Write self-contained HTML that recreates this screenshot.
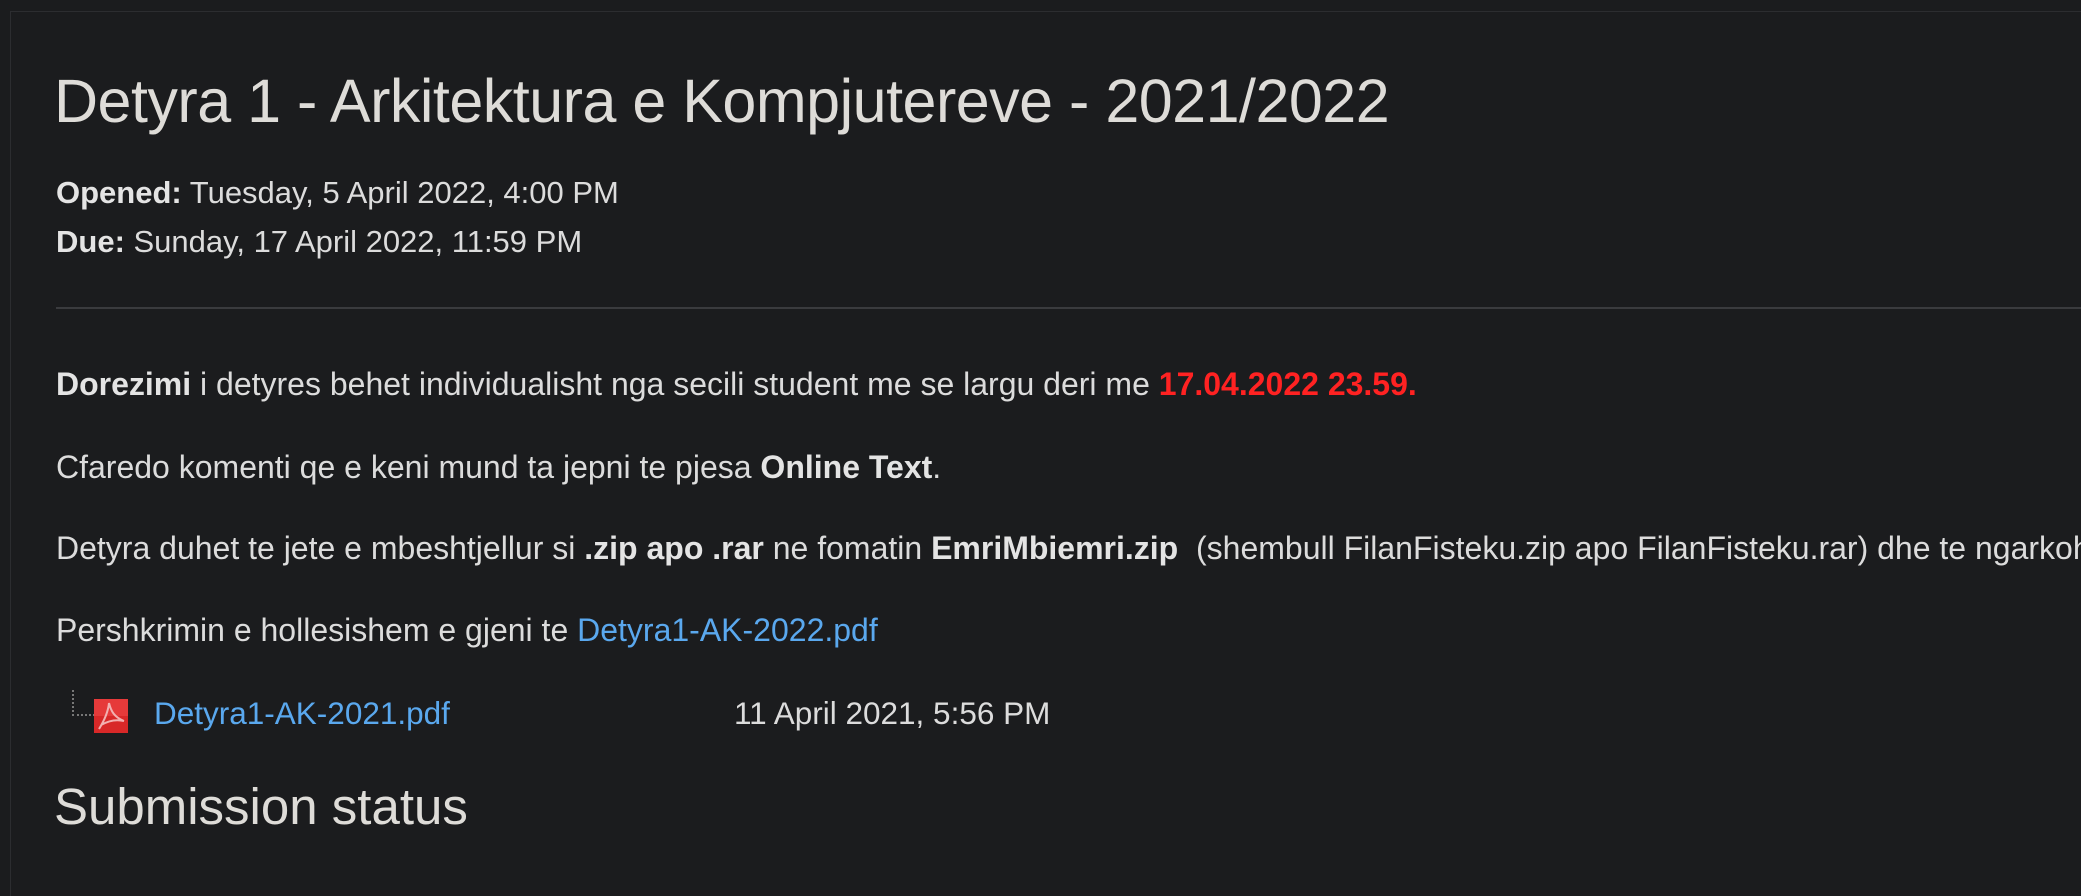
<!DOCTYPE html>
<html><head><meta charset="utf-8"><style>
html,body{margin:0;padding:0;}
body{width:2081px;height:896px;background:#1b1c1e;overflow:hidden;font-family:"Liberation Sans",sans-serif;color:#dcdcdc;}
.wrap{position:relative;width:2081px;height:896px;overflow:hidden;}
.frame{position:absolute;left:10px;top:11px;width:2070px;height:884px;border-left:1px solid #2c2d30;border-top:1px solid #2c2d30;}
.t{position:absolute;left:56px;white-space:nowrap;}
h1{margin:0;font-weight:300;font-size:61px;position:absolute;left:54px;top:66px;color:#dedcd8;white-space:nowrap;letter-spacing:-0.5px;}
.m{font-size:31px;}
.p{font-size:32px;}
b{color:#e4e4e4;}
.red{color:#ff2222;font-weight:bold;}
a{color:#5aa8ee;text-decoration:none;}
hr{position:absolute;left:56px;top:307px;width:2025px;margin:0;border:0;border-top:2px solid #3a3b3e;}
</style></head><body><div class="wrap">
<div class="frame"></div>
<h1>Detyra 1 - Arkitektura e Kompjutereve - 2021/2022</h1>
<div class="t m" style="top:175px"><b>Opened:</b> Tuesday, 5 April 2022, 4:00 PM</div>
<div class="t m" style="top:224px"><b>Due:</b> Sunday, 17 April 2022, 11:59 PM</div>
<hr>
<div class="t p" style="top:366px"><b>Dorezimi</b> i detyres behet individualisht nga secili student me se largu deri me <span class="red">17.04.2022 23.59.</span></div>
<div class="t p" style="top:449px">Cfaredo komenti qe e keni mund ta jepni te pjesa <b>Online Text</b>.</div>
<div class="t p" style="top:530px">Detyra duhet te jete e mbeshtjellur si <b>.zip apo .rar</b> ne fomatin <b>EmriMbiemri.zip</b>&nbsp; (shembull FilanFisteku.zip apo FilanFisteku.rar) dhe te ngarkohen ketu.</div>
<div class="t p" style="top:612px">Pershkrimin e hollesishem e gjeni te <a>Detyra1-AK-2022.pdf</a></div>
<div style="position:absolute;left:72px;top:690px;width:21px;height:24px;border-left:2px dotted #777;border-bottom:2px dotted #777;"></div>
<svg style="position:absolute;left:94px;top:699px" width="34" height="34" viewBox="0 0 34 34">
<rect width="34" height="34" fill="#d82828"/><rect x="0" y="0" width="34" height="17" fill="#e63a3a"/>
<path d="M15 4 C17 12 20 18 30 22 M15 4 C14 14 10 22 5 30 M7 26 C14 22 22 20 30 22" stroke="#f2b0b0" stroke-width="2" fill="none"/>
</svg>
<div class="t p" style="left:154px;top:695px;font-size:31.5px"><a>Detyra1-AK-2021.pdf</a></div>
<div class="t p" style="left:734px;top:695px;font-size:31.5px">11 April 2021, 5:56 PM</div>
<div class="t" style="left:54px;top:777px;font-size:51px;font-weight:300;color:#dedcd8;">Submission status</div>
</div></body></html>
